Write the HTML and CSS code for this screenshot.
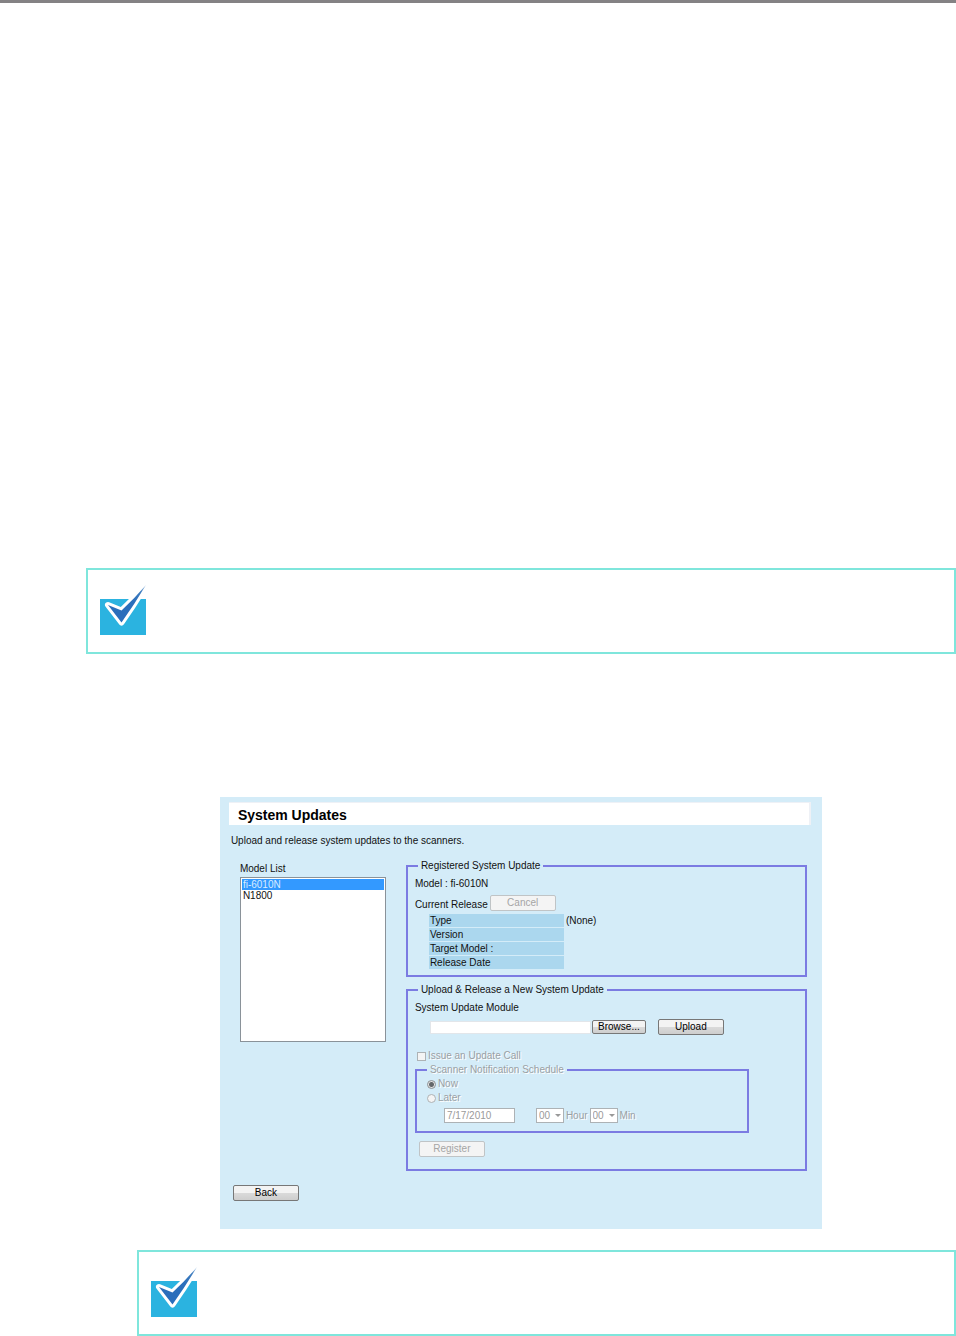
FILE: index.html
```html
<!DOCTYPE html>
<html lang="en">
<head>
<meta charset="utf-8">
<title>System Updates</title>
<link rel="stylesheet" href="styles.css">
</head>
<body>
<main class="page">
  <aside class="note note-outer">
    <svg class="note-icon" viewBox="0 0 46 50" aria-hidden="true">
      <defs>
        <linearGradient id="tick" gradientUnits="userSpaceOnUse" x1="34" y1="17" x2="46" y2="0">
          <stop offset="0" stop-color="#2a6ebb"/>
          <stop offset="0.6" stop-color="#3f7dbf"/>
          <stop offset="1" stop-color="#b4cfe8"/>
        </linearGradient>
      </defs>
      <path d="M0 14H46V50H0Z" fill="#2bb3e0"/>
      <path d="M8 20L21.500 25.500Q34 14 46 0Q34 20 21.500 37.500Z" fill="#fff" stroke="#fff" stroke-width="6" stroke-linejoin="round"/>
      <path d="M8 20L21.500 25.500Q34 14 46 0Q34 20 21.500 37.500Z" fill="url(#tick)"/>
    </svg>
  </aside>

  <section class="panel">
    <h1 class="title">System Updates</h1>
    <p class="intro">Upload and release system updates to the scanners.</p>
    <div class="columns">
      <div class="models">
        <label for="models">Model List</label>
        <select class="model-list" id="models" size="14">
          <option selected>fi-6010N</option>
          <option>N1800</option>
        </select>
      </div>
      <div class="forms">
        <fieldset class="group">
          <legend>Registered System Update</legend>
          <p class="line">Model : fi-6010N</p>
          <div class="release">
            <span>Current Release</span>
            <button class="button" type="button" disabled>Cancel</button>
          </div>
          <table class="details">
            <tr><th scope="row">Type</th><td>(None)</td></tr>
            <tr><th scope="row">Version</th><td></td></tr>
            <tr><th scope="row">Target Model :</th><td></td></tr>
            <tr><th scope="row">Release Date</th><td></td></tr>
          </table>
        </fieldset>
        <fieldset class="group">
          <legend>Upload &amp; Release a New System Update</legend>
          <label class="line" for="module">System Update Module</label>
          <div class="upload">
            <input class="file" id="module" type="text">
            <button class="button browse" type="button">Browse...</button>
            <button class="button send" type="button">Upload</button>
          </div>
          <label class="choice call off"><input type="checkbox" disabled>Issue an Update Call</label>
          <fieldset class="group schedule off">
            <legend>Scanner Notification Schedule</legend>
            <label class="choice"><input type="radio" name="when" checked disabled>Now</label>
            <label class="choice"><input type="radio" name="when" disabled>Later</label>
            <div class="time">
              <input class="date" type="text" value="7/17/2010" aria-label="Date" disabled>
              <span class="drop"><select id="hour" disabled><option>00</option></select></span>
              <label for="hour">Hour</label>
              <span class="drop"><select id="minute" disabled><option>00</option></select></span>
              <label for="minute">Min</label>
            </div>
          </fieldset>
          <button class="button register" type="button" disabled>Register</button>
        </fieldset>
      </div>
    </div>
    <button class="button back" type="button">Back</button>
  </section>

  <aside class="note note-inner">
    <svg class="note-icon" viewBox="0 0 46 50" aria-hidden="true">
      <path d="M0 14H46V50H0Z" fill="#2bb3e0"/>
      <path d="M8 20L21.500 25.500Q34 14 46 0Q34 20 21.500 37.500Z" fill="#fff" stroke="#fff" stroke-width="6" stroke-linejoin="round"/>
      <path d="M8 20L21.500 25.500Q34 14 46 0Q34 20 21.500 37.500Z" fill="url(#tick)"/>
    </svg>
  </aside>
</main>
</body>
</html>
```
FILE: styles.css
```css
* { box-sizing: border-box; }

body, h1, p { margin: 0; }

body {
  background: #fff;
  color: #111;
  font: 10px/12px "Liberation Sans", Arial, sans-serif;
}

button, input, select { font: inherit; margin: 0; }

.page {
  display: flex;
  flex-direction: column;
  border-top: 3px solid #848284;
}

.note {
  border: 2px solid #7fe6dc;
  padding: 15px 12px 17px;
}
.note-outer { margin: 565px 0 0 86px; }
.note-inner { margin: 21px 0 0 137px; }
.note-icon { display: block; width: 46px; height: 50px; }

.panel {
  margin: 143px 14% 0 23%;
  padding: 5px 11px 28px 9px;
  background: #d4ecf8;
}

.title {
  padding: 3px 9px 0;
  border: solid #eef1f6;
  border-width: 1px 2px 0 0;
  background: #fff;
  color: #000;
  font-size: 14px;
  line-height: 19px;
}

.intro { padding: 10px 2px 0; }

.columns { display: flex; gap: 20px; padding: 13px 4px 0 11px; }

.models {
  display: flex;
  flex-direction: column;
  flex: none;
  width: 146px;
  padding-top: 3px;
}

.model-list {
  width: 100%;
  height: 165px;
  margin-top: 2px;
  padding: 1px;
  border: 1px solid #8a9299;
  border-radius: 0;
  background: #fff;
  color: #111;
  overflow: hidden;
}
.model-list option { min-height: 11px; padding: 0 1px; line-height: 11px; }
.model-list option:checked {
  background: #3399ff linear-gradient(#3399ff, #3399ff);
  -webkit-text-fill-color: #d8ecff;
}

.forms { display: flex; flex-direction: column; flex: 1; gap: 7px; }

.group {
  min-width: 0;
  margin: 0;
  padding: 0 7px 5px;
  border: 2px solid #7b7be2;
}
.group legend { margin-left: 3px; padding: 0 3px; }

.line { display: block; padding-top: 5px; line-height: 14px; }

.release { display: flex; align-items: flex-end; gap: 2px; padding-top: 4px; }

.details { margin: 3px 0 0 14px; border-spacing: 0; }
.details th, .details td { height: 14px; padding: 0 2px; line-height: 13px; text-align: left; vertical-align: top; font-weight: normal; }
.details th {
  width: 135px;
  padding-left: 1px;
  border-bottom: 1px solid #d4ecf8;
  background: #abd7ee;
}

.button {
  width: 66px;
  height: 16px;
  padding: 0;
  border: 1px solid #777;
  border-radius: 2px;
  background: linear-gradient(#f3f3f3 50%, #dadada 50%, #cecece);
  color: #000;
  line-height: 12px;
}
.button:disabled { border-color: #c0c4c6; background: #f4f4f4; color: #a5a5a5; }

.upload { display: flex; align-items: center; padding: 4px 0 0 15px; }
.file { width: 161px; height: 13px; padding: 0 2px; border: 1px solid #e2e6ea; background: #fff; }
.browse { width: 54px; height: 14px; margin-left: 1px; line-height: 10px; }
.send { margin-left: 12px; }

.off { color: #9aa0a4; text-shadow: 1px 1px #fff; }

.choice { display: flex; align-items: center; gap: 2px; line-height: 14px; }
.choice input {
  appearance: none;
  width: 9px;
  height: 9px;
  border: 1px solid #adb2b5;
  background: #f4f4f4;
}
.choice input[type="radio"] { border-radius: 50%; }
.choice input[type="radio"]:checked {
  border-color: #8d9194;
  background: radial-gradient(circle, #63676a 2px, #e4e4e4 3px);
}
.call { padding: 14px 0 0 2px; }

.schedule { width: 334px; max-width: 100%; margin-top: 1px; padding: 1px 10px 8px; }
.schedule legend { margin-left: 0; }

.time { display: flex; align-items: center; gap: 2px; padding: 3px 0 0 17px; }
.time input, .time select {
  height: 15px;
  padding: 0 2px;
  border: 1px solid #adb2b5;
  border-radius: 0;
  background: #fff;
  color: #9a9a9a;
  opacity: 1;
}
.date { width: 71px; margin-right: 19px; }
.drop { position: relative; display: flex; }
.drop select { appearance: none; width: 28px; }
.drop::after {
  content: "";
  position: absolute;
  top: 6px;
  right: 3px;
  border: 3px solid transparent;
  border-top-color: #999;
  border-bottom: 0;
}

.register { display: block; margin: 8px 0 7px 4px; }
.back { display: block; margin: 14px 0 0 4px; }
```
